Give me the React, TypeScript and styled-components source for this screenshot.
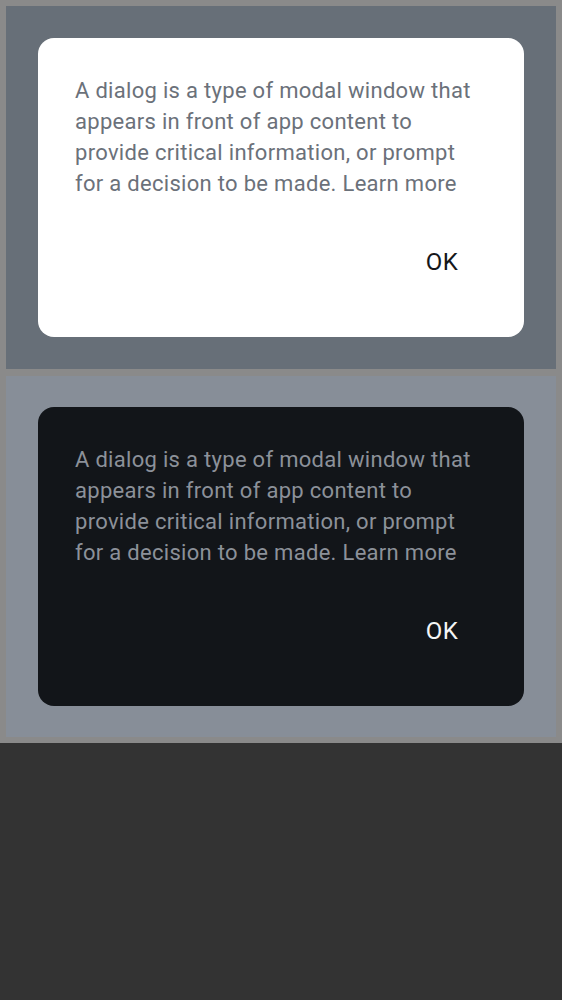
import React from "react";
import styled, { createGlobalStyle } from "styled-components";

const Global = createGlobalStyle`
  html, body { margin: 0; padding: 0; background: #333333; }
  body { font-family: Roboto, "Noto Sans", sans-serif; }
`;

const Frame = styled.div`
  background: #8a8a8a;
  padding: 6px;
  display: flex;
  flex-direction: column;
  gap: 7px;
`;

const Panel = styled.section<{ $dark?: boolean }>`
  background: ${(p) => (p.$dark ? "#878e98" : "#676f78")};
  padding: ${(p) => (p.$dark ? "31px 32px 31px" : "32px 32px 32px")};
`;

const Dialog = styled.div<{ $dark?: boolean }>`
  background: ${(p) => (p.$dark ? "#121519" : "#ffffff")};
  border-radius: 16px;
  height: 299px;
  box-sizing: border-box;
  padding: 37px 0 0 37px;
  display: flex;
  flex-direction: column;
`;

const Body = styled.p<{ $dark?: boolean }>`
  margin: 0;
  max-width: 405px;
  font-size: 22px;
  line-height: 31px;
  letter-spacing: 0.3px;
  color: ${(p) => (p.$dark ? "#8c9199" : "#6b717a")};
`;

const Actions = styled.div`
  display: flex;
  justify-content: flex-end;
  margin-top: 43px;
  padding-right: 50px;
`;

const OkButton = styled.button<{ $dark?: boolean }>`
  height: 40px;
  padding: 0 16px;
  border: none;
  background: transparent;
  font-family: Roboto, "Noto Sans", sans-serif;
  font-size: 24px;
  font-weight: 400;
  letter-spacing: 0.3px;
  color: ${(p) => (p.$dark ? "#f4f5f6" : "#15171a")};
`;

const text =
  "A dialog is a type of modal window that appears in front of app content to provide critical information, or prompt for a decision to be made. Learn more";

function DialogCard({ dark }: { dark?: boolean }) {
  return (
    <Panel $dark={dark}>
      <Dialog $dark={dark}>
        <Body $dark={dark}>{text}</Body>
        <Actions>
          <OkButton $dark={dark}>OK</OkButton>
        </Actions>
      </Dialog>
    </Panel>
  );
}

export default function App() {
  return (
    <>
      <Global />
      <Frame>
        <DialogCard />
        <DialogCard dark />
      </Frame>
    </>
  );
}
